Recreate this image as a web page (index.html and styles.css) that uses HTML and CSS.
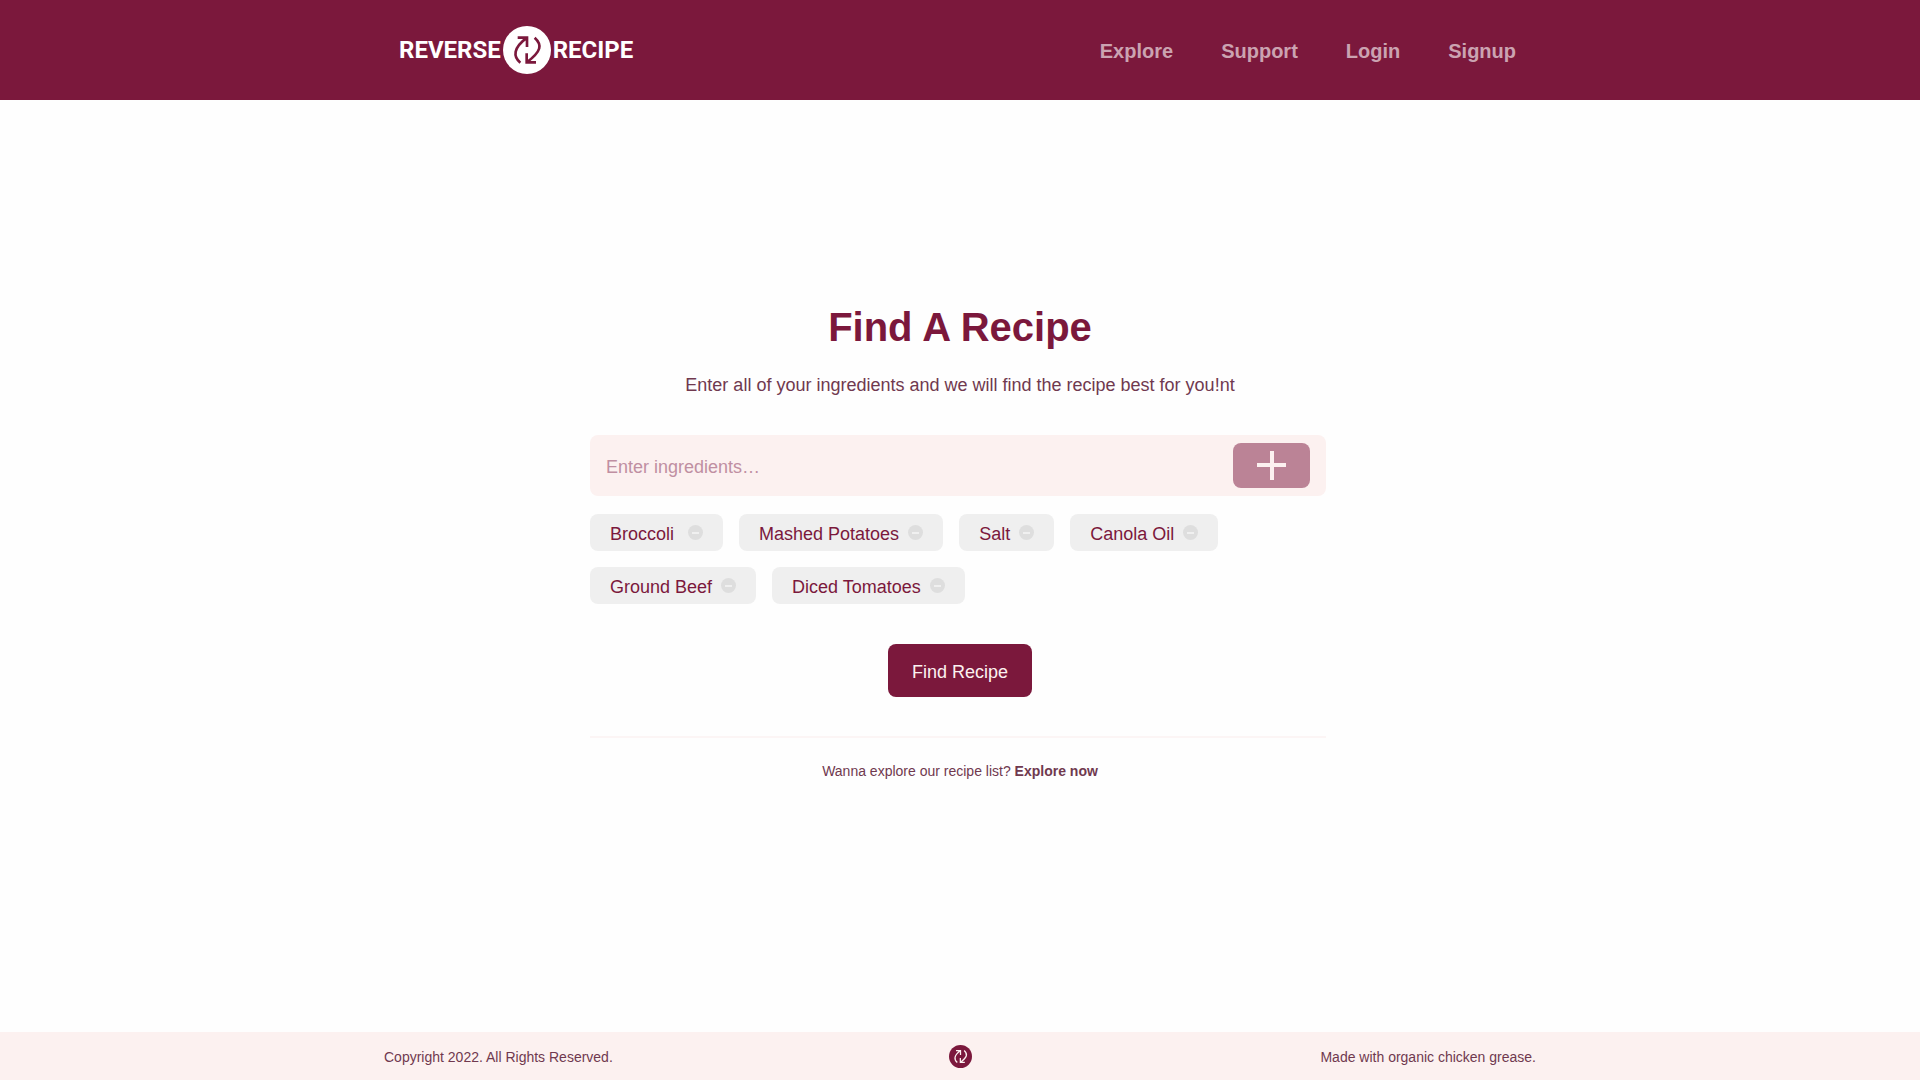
FILE: index.html
```html
<!DOCTYPE html>
<html lang="en">
<head>
  <meta charset="utf-8">
  <meta name="viewport" content="width=device-width, initial-scale=1">
  <title>Reverse Recipe</title>
  <link rel="stylesheet" href="styles.css">
</head>
<body>
  <svg class="symbols" aria-hidden="true">
    <symbol id="swap" viewBox="0 0 144 144">
      <circle class="mark-disc" cx="72" cy="72" r="72"/>
      <g class="mark-arrows">
        <path d="M52 110C30 92 30 66 72 35M44 35H72V63"/>
        <path d="M95 35C118 56 116 76 71 109M71 82V109H99"/>
      </g>
    </symbol>
    <symbol id="minus" viewBox="0 0 15 15">
      <circle cx="7.5" cy="7.5" r="7.5" fill="#dedede"/>
      <path d="M4 8H11" stroke="#f0f0f0" stroke-width="2"/>
    </symbol>
  </svg>

  <header class="site-header">
    <div class="header-inner">
      <a class="logo" href="#">
        <span>REVERSE</span>
        <svg class="mark mark-light" aria-hidden="true"><use href="#swap"/></svg>
        <span>RECIPE</span>
      </a>
      <nav class="site-nav">
        <a href="#">Explore</a>
        <a href="#">Support</a>
        <a href="#">Login</a>
        <a href="#">Signup</a>
      </nav>
    </div>
  </header>

  <main class="finder">
    <h1>Find A Recipe</h1>
    <p class="intro">Enter all of your ingredients and we will find the recipe best for you!nt</p>
    <form class="finder-form">
      <div class="entry">
        <input class="entry-input" type="text" placeholder="Enter ingredients…" aria-label="Enter ingredients">
        <button class="entry-add" type="button" aria-label="Add ingredient">
          <svg width="29" height="29" viewBox="0 0 29 29" aria-hidden="true"><path d="M15 0V29M0 14H29" stroke="#fcf1f0" stroke-width="4"/></svg>
        </button>
      </div>
      <ul class="chips">
        <li class="chip"><span>Broccoli&nbsp;</span><button type="button" aria-label="Remove Broccoli"><svg aria-hidden="true"><use href="#minus"/></svg></button></li>
        <li class="chip"><span>Mashed Potatoes</span><button type="button" aria-label="Remove Mashed Potatoes"><svg aria-hidden="true"><use href="#minus"/></svg></button></li>
        <li class="chip"><span>Salt</span><button type="button" aria-label="Remove Salt"><svg aria-hidden="true"><use href="#minus"/></svg></button></li>
        <li class="chip"><span>Canola Oil</span><button type="button" aria-label="Remove Canola Oil"><svg aria-hidden="true"><use href="#minus"/></svg></button></li>
        <li class="chip"><span>Ground Beef</span><button type="button" aria-label="Remove Ground Beef"><svg aria-hidden="true"><use href="#minus"/></svg></button></li>
        <li class="chip"><span>Diced Tomatoes</span><button type="button" aria-label="Remove Diced Tomatoes"><svg aria-hidden="true"><use href="#minus"/></svg></button></li>
      </ul>
      <button class="submit" type="submit">Find Recipe</button>
    </form>
    <p class="more">Wanna explore our recipe list? <a href="#">Explore now</a></p>
  </main>

  <footer class="site-footer">
    <div class="footer-inner">
      <span>Copyright 2022. All Rights Reserved.</span>
      <svg class="mark mark-small" aria-hidden="true"><use href="#swap"/></svg>
      <span class="footer-end">Made with organic chicken grease.</span>
    </div>
  </footer>
</body>
</html>
```
FILE: styles.css
```css
:root {
  --wine: #7b183c;
  --blush: #fcf1f0;
  --text: #70394f;
}

* {
  box-sizing: border-box;
}

body {
  display: flex;
  flex-direction: column;
  min-height: 100vh;
  margin: 0;
  background: #fefefe;
  color: var(--text);
  font: 18px/24px "Helvetica Neue", "Liberation Sans", Arial, sans-serif;
}

button,
input {
  border: 0;
  font: inherit;
}

button {
  padding: 0;
  cursor: pointer;
}

a {
  color: inherit;
  text-decoration: none;
}

.symbols {
  display: none;
}

.site-header {
  background: var(--wine);
}

.header-inner,
.footer-inner {
  max-width: 1152px;
  margin: 0 auto;
}

.header-inner {
  display: flex;
  align-items: center;
  justify-content: space-between;
  min-height: 100px;
  padding: 0 20px 0 15px;
}

.logo {
  display: flex;
  align-items: center;
  gap: 2px;
  color: #fff;
  font: 700 24px/28px Roboto, sans-serif;
}

.mark {
  width: 48px;
  height: 48px;
  fill: none;
  stroke-width: 8px;
}

.mark-disc {
  fill: currentColor;
  stroke: none;
}

.mark-light {
  color: #fff;
  stroke: var(--wine);
}

.mark-small {
  width: 23px;
  height: 23px;
  color: var(--wine);
  stroke: var(--blush);
}

.site-nav {
  display: flex;
  gap: 48px;
  padding-top: 2px;
  color: #cba3b1;
  font-size: 20px;
  font-weight: 700;
}

.finder {
  display: flex;
  flex: 1;
  flex-direction: column;
  justify-content: center;
  width: 100%;
  max-width: 740px;
  margin: 0 auto;
  padding-bottom: 48px;
  text-align: center;
}

h1 {
  margin: 0 0 22px;
  color: var(--wine);
  font-size: 40px;
  line-height: 48px;
}

.intro {
  margin: 0 0 38px;
}

.finder-form {
  display: flex;
  flex-direction: column;
}

.entry {
  display: flex;
  align-items: center;
  margin-right: 4px;
  padding: 8px 16px;
  border-radius: 8px;
  background: var(--blush);
}

.entry-input {
  flex: 1;
  min-width: 0;
  padding: 2px 0 0;
  background: none;
  color: var(--wine);
}

.entry-input::placeholder {
  color: #c08fa2;
  opacity: 1;
}

.entry-add {
  display: grid;
  place-items: center;
  width: 77px;
  height: 45px;
  border-radius: 8px;
  background: #bb8396;
}

.chips {
  display: flex;
  flex-wrap: wrap;
  gap: 16px;
  margin: 18px 0 40px;
  padding: 0;
  list-style: none;
}

.chip {
  display: flex;
  align-items: center;
  gap: 9px;
  min-height: 37px;
  padding: 0 20px;
  border-radius: 8px;
  background: #efefef;
  color: var(--wine);
}

.chip span {
  padding-top: 2px;
}

.chip button,
.chip svg {
  display: block;
  width: 15px;
  height: 15px;
  background: none;
}

.submit {
  align-self: center;
  min-height: 53px;
  padding: 2px 24px 0;
  border-radius: 8px;
  background: var(--wine);
  color: #fcf1f0;
}

.more {
  margin: 39px 4px 0 0;
  padding: 23px 0 0 4px;
  border-top: 2px solid #fcf5f5;
  font-size: 14px;
  line-height: 20px;
}

.more a {
  font-weight: 700;
}

.site-footer {
  background: var(--blush);
  font-size: 14px;
  line-height: 20px;
}

.footer-inner {
  display: grid;
  grid-template-columns: 1fr auto 1fr;
  align-items: center;
  min-height: 48px;
}

.footer-inner span {
  padding-top: 2px;
}

.footer-end {
  text-align: right;
}
```
